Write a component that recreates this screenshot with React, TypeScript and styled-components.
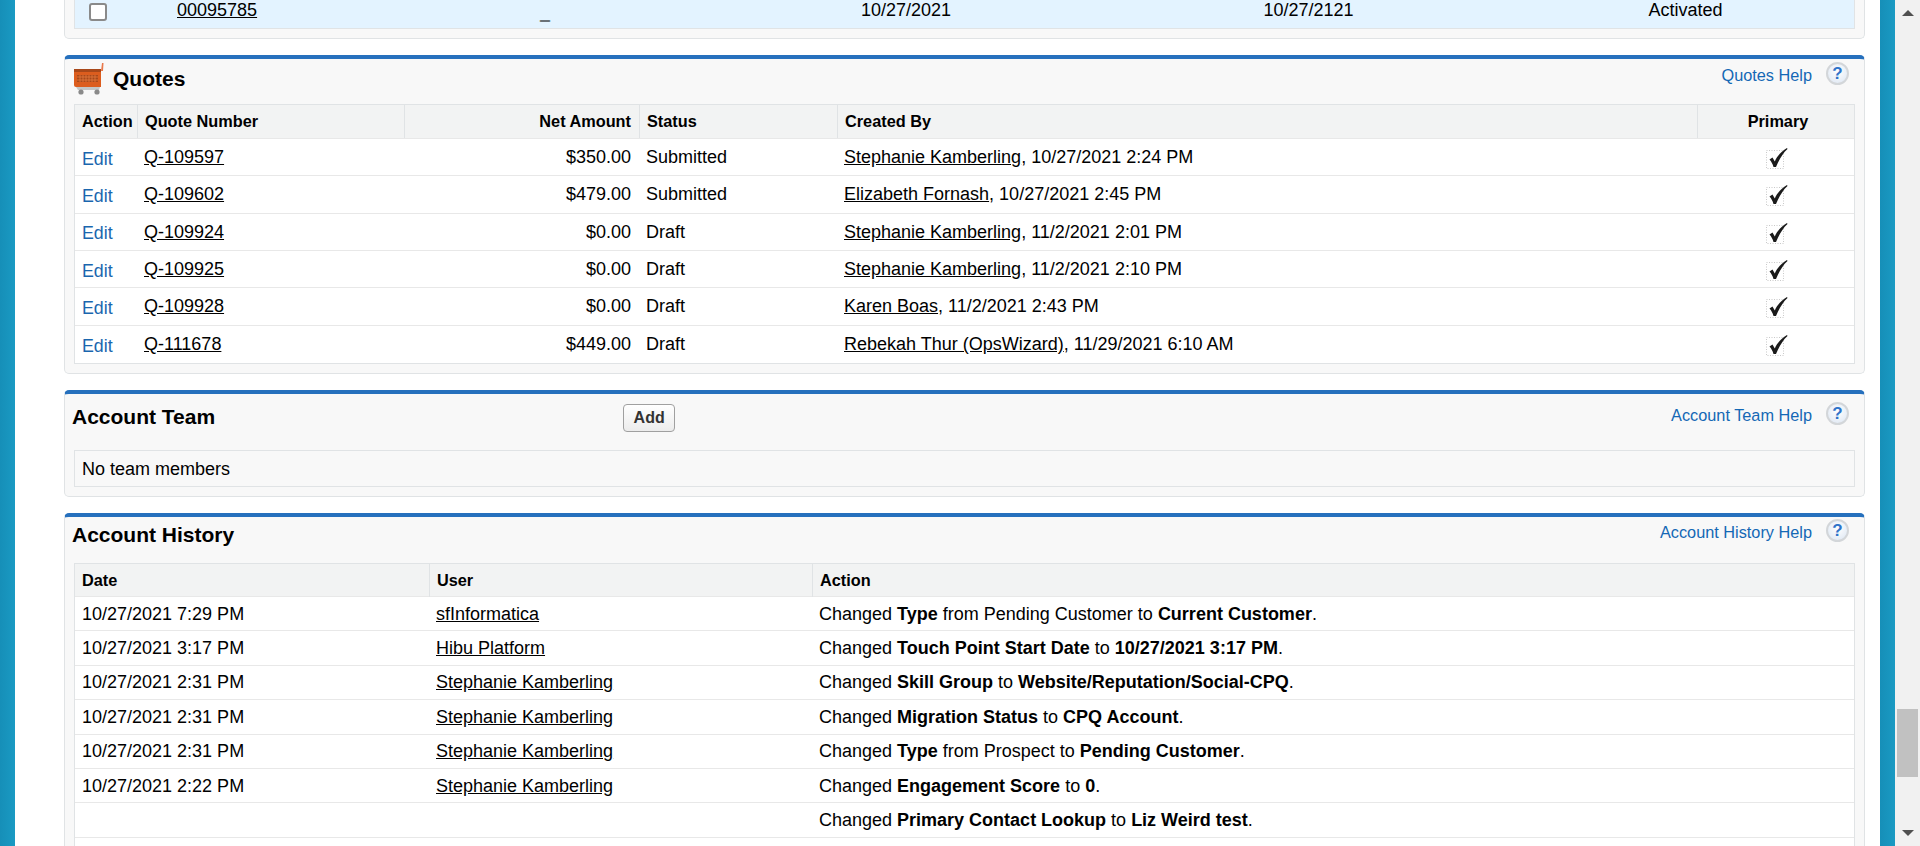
import { Fragment, type ReactNode } from "react";
import styled, { createGlobalStyle } from "styled-components";

const GlobalStyle = createGlobalStyle`
    html, body {
        margin: 0;
        padding: 0;
        height: 100%;
        overflow: hidden;
        background: #fff;
        font-family: "Liberation Sans", Arial, sans-serif;
        color: #000;
    }
`;

const Page = styled.div`
    display: flex;
    height: 846px;
    overflow: hidden;
`;
const Rail = styled.div`
    flex: 0 0 15px;
    background: linear-gradient(to right, #168fb8, #1a9ac3);
`;
const Main = styled.div`
    flex: 1;
    min-width: 0;
    padding: 0 15px 0 49px;
`;
const ScrollBar = styled.div`
    flex: 0 0 25px;
    background: #f1f1f1;
    display: flex;
    flex-direction: column;
    align-items: center;
`;
const Arrow = styled.div<{ $down?: boolean }>`
    width: 0;
    height: 0;
    border-left: 6px solid transparent;
    border-right: 6px solid transparent;
    ${(p) =>
        p.$down
            ? "border-top: 6px solid #505050; margin-top: 53px;"
            : "border-bottom: 6px solid #505050; margin-top: 10px;"}
`;
const Thumb = styled.div`
    width: 21px;
    height: 68px;
    margin-top: 693px;
    background: #c1c1c1;
`;

const Panel = styled.section<{ $open?: boolean }>`
    box-sizing: border-box;
    background: #f8f8f8;
    border: 1px solid #e0e3e5;
    border-top: ${(p) => (p.$open ? "none" : "4px solid #2670bd")};
    border-radius: ${(p) => (p.$open ? "0 0 5px 5px" : "5px")};
    padding: 0 9px 9px;
    margin-bottom: 16px;
`;
const PanelHead = styled.div<{ $h: number }>`
    display: flex;
    height: ${(p) => p.$h}px;
    margin-left: -2px;
`;
const CartSlot = styled.div`
    margin: 3px 7px 0 0;
`;
const Title = styled.h2<{ $top: number }>`
    margin: ${(p) => p.$top}px 0 0;
    font-size: 21px;
    line-height: 30px;
    font-weight: 700;
`;
const AddButton = styled.button<{ $left: number }>`
    box-sizing: border-box;
    width: 52px;
    height: 28px;
    margin: 10px 0 0 ${(p) => p.$left}px;
    padding: 0;
    border: 1px solid #a0a0a0;
    border-radius: 4px;
    background: linear-gradient(#fff, #ececec);
    font: 700 16px "Liberation Sans", Arial, sans-serif;
    color: #333;
`;
const HelpLink = styled.a<{ $top: number }>`
    display: flex;
    align-items: flex-start;
    gap: 14px;
    margin-left: auto;
    margin-right: 6px;
    padding-top: ${(p) => p.$top}px;
    color: #1468b5;
    font-size: 16.3px;
    line-height: 26px;
`;
const HelpDot = styled.span`
    box-sizing: border-box;
    width: 23px;
    height: 23px;
    border-radius: 50%;
    border: 2px solid #d3d6d9;
    background: radial-gradient(circle at 50% 40%, #fff, #dbe5f2);
    color: #2f73c9;
    font-size: 17px;
    font-weight: 700;
    line-height: 19px;
    text-align: center;
`;
const Table = styled.div<{ $open?: boolean }>`
    border: 1px solid #e0e3e5;
    ${(p) => (p.$open ? "border-top: none;" : "")}
    background: #fff;
    font-size: 18px;
`;
const Row = styled.div<{ $cols: string; $h: number; $kind?: "head" | "hit" }>`
    box-sizing: border-box;
    display: grid;
    grid-template-columns: ${(p) => p.$cols};
    height: ${(p) => p.$h}px;
    align-items: ${(p) => (p.$kind === "hit" ? "start" : "center")};
    line-height: ${(p) => (p.$kind === "hit" ? "20px" : "24px")};
    background: ${(p) =>
        p.$kind === "head" ? "#f2f3f3" : p.$kind === "hit" ? "#e3f3ff" : "#fff"};
    border-bottom: ${(p) => (p.$kind === "hit" ? "none" : "1px solid #e8e8e8")};
    &:last-child {
        border-bottom: none;
    }
`;
const HeadCell = styled.div<{ $align?: string }>`
    box-sizing: border-box;
    height: 100%;
    padding: 0 8px 0 7px;
    border-left: 1px solid #e0e3e5;
    font-size: 16.3px;
    font-weight: 700;
    line-height: 33px;
    text-align: ${(p) => p.$align || "left"};
    &:first-child {
        border-left: none;
    }
`;
const PrimaryHead = styled(HeadCell)`
    padding-left: 11px;
    padding-right: 7px;
`;
const Cell = styled.div<{ $align?: string }>`
    padding: 0 8px 0 7px;
    white-space: nowrap;
    text-align: ${(p) => p.$align || "left"};
`;
const EditCell = styled(Cell)`
    padding-top: 3px;
`;
const CheckCell = styled(Cell)`
    padding-top: 2px;
    padding-left: 11px;
    line-height: 0;
`;
const DashCell = styled(Cell)`
    padding-top: 3px;
    font-weight: 700;
    text-shadow: 0 1px 0 #000;
`;
const Plain = styled.a`
    color: #000;
    text-decoration: underline;
`;
const EditLink = styled.a`
    color: #1a66ae;
    font-size: 17.8px;
`;
const Box = styled.span`
    display: block;
    box-sizing: border-box;
    width: 18px;
    height: 18px;
    margin: 3px 0 0 7px;
    border: 2px solid #8a8a8a;
    border-radius: 3px;
    background: #fff;
`;
const Message = styled.div`
    padding: 1px 7px 0;
    line-height: 34px;
    background: #f8f8f8;
`;
const CheckSvg = styled.svg`
    display: block;
    margin: 0 auto;
`;

const CheckMark = () => (
    <CheckSvg width="26" height="24" viewBox="0 0 26 24">
        <rect x="2.5" y="4.5" width="17" height="18" fill="none" stroke="#c9c9c9" strokeDasharray="1 1.5" />
        <path d="M5.5 13.5 L8.5 11.5 L10.8 15.5 C13 10.5 17 5.5 23 2 L23.5 3 C18.5 7.5 15 14 12 21 L9.5 21 C8.7 18 7.3 15.5 5.5 13.5 Z" fill="#1a1a1a" />
    </CheckSvg>
);

const CartIcon = () => (
    <svg width="34" height="34" viewBox="0 0 34 34">
        <path d="M30 1 L31.5 1 L31 9 L29 9 Z" fill="#e8784a" />
        <path d="M2 7 L29 7 L29 25 L4 25 Q2 25 2 23 Z" fill="#dc5d1e" />
        <path d="M2 7 L29 7 L29 10 L2 10 Z" fill="#a8481a" />
        <path d="M5 13 H26 V20 H5 Z" fill="#a8481a" />
        <path d="M5 15 H26 M5 18 H26 M8 13 V20 M11 13 V20 M14 13 V20 M17 13 V20 M20 13 V20 M23 13 V20" stroke="#e57a3c" strokeWidth="0.8" />
        <path d="M4 25 H28 L27 28 H6 Z" fill="#c3c6c6" />
        <circle cx="9" cy="30" r="2.6" fill="#8a8a8a" />
        <circle cx="25" cy="30" r="2.6" fill="#8a8a8a" />
    </svg>
);

const quoteCols = "62px 267px 235px 198px 860px 1fr";
const quotes = [
    ["Q-109597", "$350.00", "Submitted", "Stephanie Kamberling", "10/27/2021 2:24 PM"],
    ["Q-109602", "$479.00", "Submitted", "Elizabeth Fornash", "10/27/2021 2:45 PM"],
    ["Q-109924", "$0.00", "Draft", "Stephanie Kamberling", "11/2/2021 2:01 PM"],
    ["Q-109925", "$0.00", "Draft", "Stephanie Kamberling", "11/2/2021 2:10 PM"],
    ["Q-109928", "$0.00", "Draft", "Karen Boas", "11/2/2021 2:43 PM"],
    ["Q-111678", "$449.00", "Draft", "Rebekah Thur (OpsWizard)", "11/29/2021 6:10 AM"],
];

const historyCols = "354px 383px 1fr";
const history: [string, string, ReactNode][] = [
    ["10/27/2021 7:29 PM", "sfInformatica", <Fragment>Changed <b>Type</b> from Pending Customer to <b>Current Customer</b>.</Fragment>],
    ["10/27/2021 3:17 PM", "Hibu Platform", <Fragment>Changed <b>Touch Point Start Date</b> to <b>10/27/2021 3:17 PM</b>.</Fragment>],
    ["10/27/2021 2:31 PM", "Stephanie Kamberling", <Fragment>Changed <b>Skill Group</b> to <b>Website/Reputation/Social-CPQ</b>.</Fragment>],
    ["10/27/2021 2:31 PM", "Stephanie Kamberling", <Fragment>Changed <b>Migration Status</b> to <b>CPQ Account</b>.</Fragment>],
    ["10/27/2021 2:31 PM", "Stephanie Kamberling", <Fragment>Changed <b>Type</b> from Prospect to <b>Pending Customer</b>.</Fragment>],
    ["10/27/2021 2:22 PM", "Stephanie Kamberling", <Fragment>Changed <b>Engagement Score</b> to <b>0</b>.</Fragment>],
    ["", "", <Fragment>Changed <b>Primary Contact Lookup</b> to <b>Liz Weird test</b>.</Fragment>],
    ["", "", ""],
];

export default function App() {
    return (
        <Page>
            <GlobalStyle />
            <Rail />
            <Main>
                <Panel $open>
                    <Table $open>
                        <Row $cols="95px 363px 321px 402.5px 385px 1fr" $h={28} $kind="hit">
                            <Cell><Box /></Cell>
                            <Cell><Plain>00095785</Plain></Cell>
                            <DashCell>_</DashCell>
                            <Cell>10/27/2021</Cell>
                            <Cell>10/27/2121</Cell>
                            <Cell>Activated</Cell>
                        </Row>
                    </Table>
                </Panel>

                <Panel>
                    <PanelHead $h={45}>
                        <CartSlot><CartIcon /></CartSlot>
                        <Title $top={5}>Quotes</Title>
                        <HelpLink $top={3}>Quotes Help <HelpDot>?</HelpDot></HelpLink>
                    </PanelHead>
                    <Table>
                        <Row $cols={quoteCols} $h={34} $kind="head">
                            <HeadCell>Action</HeadCell>
                            <HeadCell>Quote Number</HeadCell>
                            <HeadCell $align="right">Net Amount</HeadCell>
                            <HeadCell>Status</HeadCell>
                            <HeadCell>Created By</HeadCell>
                            <PrimaryHead $align="center">Primary</PrimaryHead>
                        </Row>
                        {quotes.map((q) => (
                            <Row key={q[0]} $cols={quoteCols} $h={37.33}>
                                <EditCell><EditLink>Edit</EditLink></EditCell>
                                <Cell><Plain>{q[0]}</Plain></Cell>
                                <Cell $align="right">{q[1]}</Cell>
                                <Cell>{q[2]}</Cell>
                                <Cell><Plain>{q[3]}</Plain>, {q[4]}</Cell>
                                <CheckCell><CheckMark /></CheckCell>
                            </Row>
                        ))}
                    </Table>
                </Panel>

                <Panel>
                    <PanelHead $h={56}>
                        <Title $top={8}>Account Team</Title>
                        <AddButton $left={408}>Add</AddButton>
                        <HelpLink $top={8}>Account Team Help <HelpDot>?</HelpDot></HelpLink>
                    </PanelHead>
                    <Table>
                        <Message>No team members</Message>
                    </Table>
                </Panel>

                <Panel>
                    <PanelHead $h={46}>
                        <Title $top={3}>Account History</Title>
                        <HelpLink $top={2}>Account History Help <HelpDot>?</HelpDot></HelpLink>
                    </PanelHead>
                    <Table>
                        <Row $cols={historyCols} $h={33} $kind="head">
                            <HeadCell>Date</HeadCell>
                            <HeadCell>User</HeadCell>
                            <HeadCell>Action</HeadCell>
                        </Row>
                        {history.map((h, i) => (
                            <Row key={i} $cols={historyCols} $h={34.4}>
                                <Cell>{h[0]}</Cell>
                                <Cell><Plain>{h[1]}</Plain></Cell>
                                <Cell>{h[2]}</Cell>
                            </Row>
                        ))}
                    </Table>
                </Panel>
            </Main>
            <Rail />
            <ScrollBar>
                <Arrow />
                <Thumb />
                <Arrow $down />
            </ScrollBar>
        </Page>
    );
}
